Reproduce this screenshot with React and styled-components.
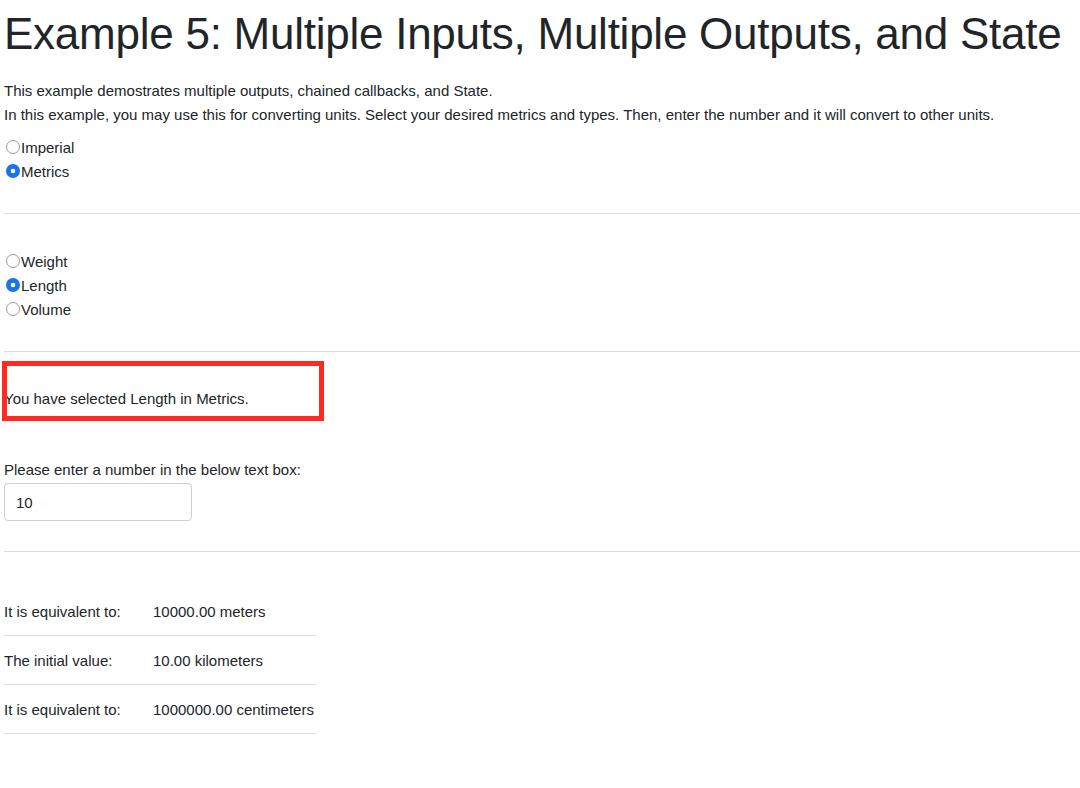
import React, { useState } from 'react';
import styled, { createGlobalStyle } from 'styled-components';

const GlobalStyle = createGlobalStyle`
  body {
    margin: 0;
    background: #fff;
    color: #212529;
    font-family: "Liberation Sans", Arial, sans-serif;
  }
`;

const Page = styled.div`
  padding: 0 0 0 4px;
`;

const Title = styled.h1`
  margin: 0;
  padding-top: 8px;
  font-size: 44px;
  font-weight: 400;
  line-height: 52px;
  color: #212529;
  letter-spacing: -0.25px;
`;

const Intro = styled.div`
  margin-top: 19px;
  font-size: 15px;
  line-height: 24px;
`;

const RadioGroup = styled.div`
  display: flex;
  flex-direction: column;
  margin-top: ${(p) => p.top || 0}px;
`;

const RadioLabel = styled.label`
  display: flex;
  align-items: center;
  height: 24px;
  font-size: 15px;
  cursor: pointer;
`;

const Radio = styled.input`
  appearance: none;
  margin: 0 1px 0 2px;
  width: 14px;
  height: 14px;
  border-radius: 50%;
  border: 1px solid #9a9a9a;
  background: #fff;
  box-sizing: border-box;

  &:checked {
    border: none;
    background: radial-gradient(circle, #fff 0 2px, #1a73e8 2.6px);
  }
`;

const Rule = styled.hr`
  margin: ${(p) => p.top}px 0 0 0;
  border: none;
  border-top: 1px solid #dcdcdc;
  height: 0;
`;

const Highlight = styled.div`
  position: relative;
  width: 316px;
  height: 57px;
  margin-top: 9px;
  display: flex;
  align-items: flex-end;
  padding-bottom: 11px;
  box-sizing: border-box;
  font-size: 15px;
`;

const Frame = styled.div`
  position: absolute;
  left: -2px;
  top: 0;
  width: 322px;
  height: 60px;
  border: 5px solid #ff2a1f;
  box-sizing: border-box;
  pointer-events: none;
`;

const FieldLabel = styled.div`
  margin-top: 42px;
  font-size: 15px;
  line-height: 20px;
`;

const NumberInput = styled.input`
  display: block;
  margin-top: 3px;
  width: 188px;
  height: 38px;
  box-sizing: border-box;
  padding: 0 11px;
  border: 1px solid #cfcfcf;
  border-radius: 4px;
  font-family: "Liberation Sans", Arial, sans-serif;
  font-size: 15px;
  color: #212529;
  outline: none;
`;

const Results = styled.table`
  margin-top: 35px;
  border-collapse: collapse;
  width: 312px;
  font-size: 15px;
`;

const Cell = styled.td`
  height: 48px;
  padding: 0;
  vertical-align: middle;
  border-bottom: 1px solid #dcdcdc;
  width: ${(p) => p.w || 'auto'};
`;

const systems = ['Imperial', 'Metrics'];
const types = ['Weight', 'Length', 'Volume'];

export default function App() {
  const [system, setSystem] = useState('Metrics');
  const [type, setType] = useState('Length');
  const [value, setValue] = useState('10');

  const n = parseFloat(value) || 0;
  const rows = [
    ['It is equivalent to:', `${(n * 1000).toFixed(2)} meters`],
    ['The initial value:', `${n.toFixed(2)} kilometers`],
    ['It is equivalent to:', `${(n * 100000).toFixed(2)} centimeters`],
  ];

  return (
    <Page>
      <GlobalStyle />
      <Title>Example 5: Multiple Inputs, Multiple Outputs, and State</Title>
      <Intro>
        This example demostrates multiple outputs, chained callbacks, and State.
        <br />
        In this example, you may use this for converting units. Select your desired metrics and types. Then, enter the number and it will convert to other units.
      </Intro>

      <RadioGroup top={8}>
        {systems.map((s) => (
          <RadioLabel key={s}>
            <Radio type="radio" name="system" checked={system === s} onChange={() => setSystem(s)} />
            {s}
          </RadioLabel>
        ))}
      </RadioGroup>

      <Rule top={30} />

      <RadioGroup top={35}>
        {types.map((t) => (
          <RadioLabel key={t}>
            <Radio type="radio" name="type" checked={type === t} onChange={() => setType(t)} />
            {t}
          </RadioLabel>
        ))}
      </RadioGroup>

      <Rule top={30} />

      <Highlight>
        You have selected {type} in {system}.
        <Frame />
      </Highlight>

      <FieldLabel>Please enter a number in the below text box:</FieldLabel>
      <NumberInput value={value} onChange={(e) => setValue(e.target.value)} />

      <Rule top={30} />

      <Results>
        <tbody>
          {rows.map(([label, val], i) => (
            <tr key={i}>
              <Cell w="149px">{label}</Cell>
              <Cell>{val}</Cell>
            </tr>
          ))}
        </tbody>
      </Results>
    </Page>
  );
}
